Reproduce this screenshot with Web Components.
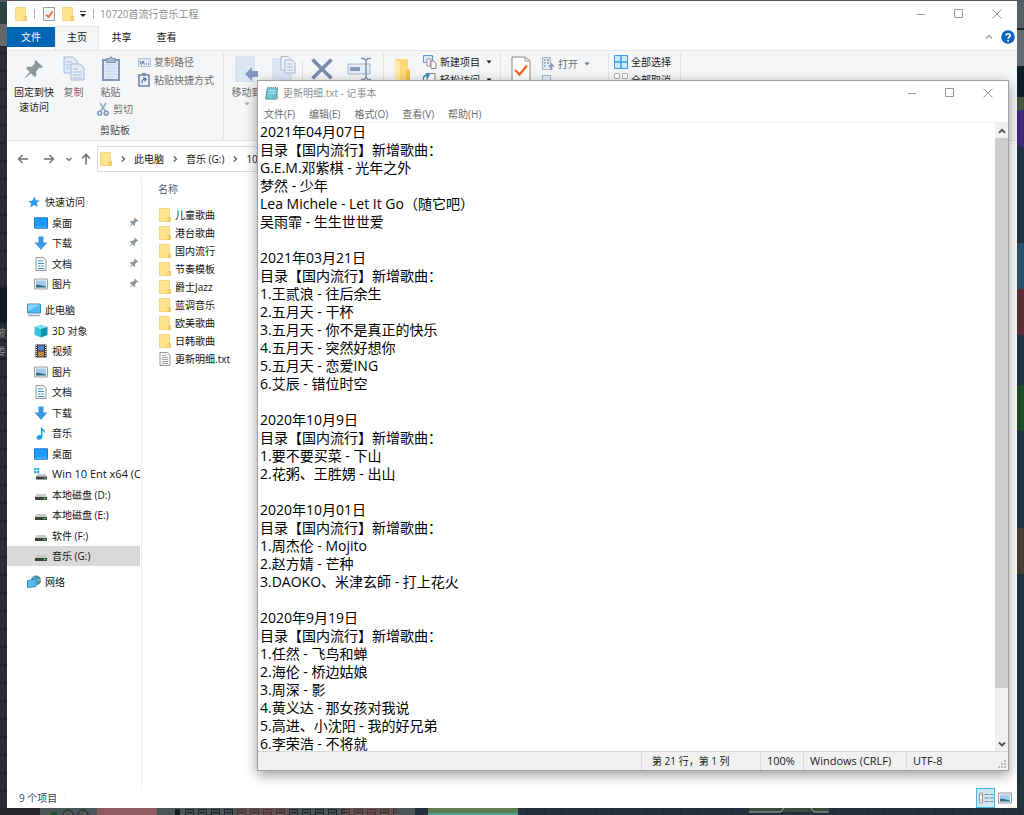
<!DOCTYPE html>
<html lang="zh-CN">
<head>
<meta charset="utf-8">
<title>10720首流行音乐工程</title>
<style>
html,body{margin:0;height:100%}
body{font:10px/16px "Open Sans","Noto Sans CJK SC",sans-serif;color:#111;background:#22323c}
</style>
</head>
<body>
<desk-top>
  <explorer-window></explorer-window>
  <notepad-window></notepad-window>
</desk-top>
<script>
const ICONS = {
  folder: ['0 0 12 14', '<path d="M.5.500h10v13H.5z" fill="#ffe391" stroke="#f5d67f"/><path d="M9 9.500h2.500v4H9z" fill="#f8d774" stroke="#efc75c"/>'],
  bigfolder: ['0 0 18 26', '<path d="M2 3h13v9l2 2v12H2z" fill="#fbd978"/><path d="M2 3l5 3v20H2z" fill="#ffe9a3"/><path d="M15 13l2 2v11h-4V15z" fill="#f0c352"/>'],
  props: ['0 0 12 14', '<path d="M.5.500h11v13H.5z" fill="#f4f4f4" stroke="#9d9d9d"/><path d="M3 7.500l2.500 2.500L9.500 4.500" fill="none" stroke="#e8622c" stroke-width="1.600"/>'],
  bigprops: ['0 0 20 26', '<path d="M1 1h13l5 4v21H1z" fill="#fff" stroke="#888"/><path d="M14 1v4h5" fill="none" stroke="#999"/><path d="M4 14l4.500 4.500L16 9.500" fill="none" stroke="#f26522" stroke-width="2.200"/>'],
  qat: ['0 0 8 8', '<path d="M1 1.500h6" stroke="#333"/><path d="M1 4h6L4 7z" fill="#222"/>'],
  min: ['0 0 10 10', '<path d="M1 5.500h8" stroke="#999"/>'],
  max: ['0 0 10 10', '<path d="M.5.500h8v8h-8z" fill="none" stroke="#999"/>'],
  close: ['0 0 10 10', '<path d="M.5.500l9 9M9.500.500l-9 9" stroke="#999"/>'],
  up: ['0 0 8 8', '<path d="M1 5.500l3-3 3 3" fill="none" stroke="#999" stroke-width="1.200"/>'],
  help: ['0 0 14 14', '<circle cx="7" cy="7" r="6.800" fill="#0a64c0"/><path d="M5 5.500C5 3.200 9.200 3.200 9.200 5.400 9.200 7 7.100 6.900 7.100 8.700" fill="none" stroke="#fff" stroke-width="1.600"/><circle cx="7.100" cy="10.700" r="1" fill="#fff"/>'],
  pin: ['0 0 20 20', '<path d="M11.500 1l7.500 7-2 1-1.500-.3-3.500 3.800.3 4-1.800 1.500L6.800 14.300 1.500 19 1 18.500l4.500-5.500L2 9.300l1.500-1.600 4 .1 3.500-3.500L10.500 3z" fill="#8a97a1"/>'],
  copy: ['0 0 22 26', '<g fill="#e3ebf6" stroke="#a9bad6"><path d="M1 1h9l4 4v12H1z"/><path d="M8 8h9l4 4v12H8z"/></g><path d="M3 6h6M3 9h5M3 12h4M10 13h5M10 16h9M10 19h9M10 22h9" stroke="#adc0dd"/>'],
  paste: ['0 0 20 26', '<path d="M2 4h16v20H2z" fill="#dfe8f5" stroke="#8396b8" stroke-width="2"/><path d="M5.500 2.500h3l1.500-2 1.500 2h3v4h-9z" fill="#a9b6cc" stroke="#8291ab"/><path d="M4 9h12M4 12h12M4 15h12M4 18h12M4 21h12" stroke="#c6d4e9"/>'],
  path: ['0 0 13 9', '<path d="M.5.500h12v8H.5z" fill="#dfe7f2" stroke="#b2c1d8"/><path d="M2 3l1.500 3.500L5 3l1.500 3.500M8 6h1M10 6h1" fill="none" stroke="#5d7396"/>'],
  shortcut: ['0 0 12 14', '<path d="M1 2h10v11H1z" fill="#eaf0f8" stroke="#7187ac" stroke-width="1.600"/><path d="M4 0h4v3H4z" fill="#7d8fae"/><path d="M4 10c0-3 1-4 3-4M5.200 4.500L8 6 6.500 8.500" fill="none" stroke="#48689d" stroke-width="1.200"/>'],
  cut: ['0 0 12 14', '<path d="M3 1l5.500 8.500M9 1L3.500 9.500" stroke="#9aa9c0" stroke-width="1.500"/><g fill="none" stroke="#7d95bd" stroke-width="1.500"><circle cx="2.800" cy="11.200" r="1.900"/><circle cx="9.200" cy="11.200" r="1.900"/></g>'],
  moveto: ['0 0 24 26', '<path d="M1 1h18v25H1z" fill="#dbe5f4" stroke="#cbd8ec"/><path d="M10 18l7-7v4h6v6h-6v4z" fill="#8398bd"/>'],
  copyto: ['0 0 24 26', '<path d="M1 3h18v23H1z" fill="#dbe5f4" stroke="#cbd8ec"/><g fill="#edf2f9" stroke="#a3b5d2"><path d="M9 .5h7l3 3V14H9z"/><path d="M13 4h7l3 3v10H13z"/></g><path d="M15 8h5M15 11h6M15 14h6" stroke="#a3b5d2"/>'],
  del: ['0 0 22 22', '<path d="M1.500 1.500l19 19M20.500 1.500l-19 19" stroke="#7a8db0" stroke-width="3.600"/>'],
  rename: ['0 0 24 24', '<path d="M1 7h22v10H1z" fill="#e7edf6" stroke="#a3b4d0"/><path d="M3 10h10v4H3z" fill="#8699bb"/><path d="M14 1.500h3l2 2 2-2h3M14 22.500h3l2-2 2 2h3M19 3v18" fill="none" stroke="#7f91b3" stroke-width="1.500"/>'],
  newitem: ['0 0 14 14', '<path d="M.5.500h9v7h-9z" fill="#d7eaf5" stroke="#5b9dbb"/><path d="M4 4h4v7H4z" fill="#fff" stroke="#999"/><path d="M8 6h3l2 2v5.500H8z" fill="#fff" stroke="#888"/><path d="M7 5v6" stroke="#d88"/>'],
  easy: ['0 0 14 14', '<path d="M4 .5h8v12H4z" fill="#fff" stroke="#888"/><path d="M0 7c0-3 2-5 5-5M3 0l3 2-2 3" fill="none" stroke="#2f8db5" stroke-width="1.500"/>'],
  open: ['0 0 12 14', '<path d="M.5.500h8v12h-8z" fill="#e4ebf5" stroke="#a5b4cd"/><path d="M2 3h1.500M2 6h1.500M2 9h1.500M5 3h2M5 6h2" stroke="#8294b3" stroke-width="1.400"/><path d="M9.500 13V8M7 10l2.500-3L12 10" fill="none" stroke="#8b9dbd" stroke-width="1.500"/>'],
  edit: ['0 0 12 14', '<path d="M.5.500h8v12h-8z" fill="#e4ebf5" stroke="#a5b4cd"/>'],
  selall: ['0 0 14 14', '<path d="M.5.500h13v13H.5z" fill="#cfe8fb" stroke="#3a9be6"/><path d="M7 0v14M0 7h14" stroke="#3a9be6" stroke-width="1.500"/>'],
  selnone: ['0 0 14 14', '<path d="M.5.500h5v5h-5zM8.500.500h5v5h-5zM.5 8.500h5v5h-5zM8.500 8.500h5v5h-5z" fill="#fff" stroke="#b5b5b5"/>'],
  tri: ['0 0 6 4', '<path d="M.5.500h5L3 3.500z" fill="currentColor"/>'],
  back: ['0 0 12 12', '<path d="M11 6H1.500M5.500 2l-4 4 4 4" fill="none" stroke="#707070" stroke-width="1.400"/>'],
  fwd: ['0 0 12 12', '<path d="M1 6h9.500M6.500 2l4 4-4 4" fill="none" stroke="#707070" stroke-width="1.400"/>'],
  down: ['0 0 8 8', '<path d="M1.500 3L4 5.500 6.500 3" fill="none" stroke="#777" stroke-width="1.300"/>'],
  upward: ['0 0 12 12', '<path d="M6 11.500V1.500M2 5.500l4-4 4 4" fill="none" stroke="#707070" stroke-width="1.600"/>'],
  chev: ['0 0 6 8', '<path d="M2 1.500L4.500 4 2 6.500" fill="none" stroke="#555" stroke-width="1.200"/>'],
  star: ['0 0 12 12', '<path d="M6.500.500l1.400 3.700 3.900.3-3 2.600.9 4L6 8.900l-3.800 2.500 1-3.900L.3 5.200l3.900-.5z" fill="#2a9df0"/>'],
  desktop: ['0 0 14 12', '<path d="M.5.800h13v10.400H.5z" fill="#1a9afc" stroke="#1479cc"/><path d="M1 10h12" stroke="#5db9ff"/>'],
  download: ['0 0 14 14', '<path d="M4.500.500h5v6h4L7 13.800.5 6.500h4z" fill="#3b97e3"/>'],
  doc: ['0 0 12 14', '<path d="M1 .5h7.500L11 3v10.500H1z" fill="#f7fafc" stroke="#8f999f"/><path d="M3 4h3M3 6.500h6M3 9h2.500M6.500 9H9M3 11.500h6M6.500 4H8" stroke="#3b93c8" stroke-width="1.200"/>'],
  pic: ['0 0 14 12', '<path d="M.5 1h13v10H.5z" fill="#f6f6f6" stroke="#999"/><path d="M2 2.500h10v7H2z" fill="#9fd0ee"/><path d="M2 9.500V6.500l4 .5 6 1.500v1z" fill="#2f6f86"/>'],
  pc: ['0 0 14 14', '<path d="M.5 1h13v9H.5z" fill="#4fb9f5" stroke="#3c8fc4"/><path d="M1 1.500h12L1 8z" fill="#8cd4fb"/><path d="M1 12.500h12" stroke="#9ab" stroke-width="1.500"/>'],
  cube: ['0 0 14 14', '<path d="M7 .5l6.500 2.200L7 5 .5 2.700z" fill="#7fe3f0"/><path d="M.5 2.700L7 5v8.500L.5 11z" fill="#39c3d8"/><path d="M13.500 2.700L7 5v8.500l6.500-2.500z" fill="#0f93b3"/>'],
  video: ['0 0 12 14', '<path d="M.5.500h11v13H.5z" fill="#333"/><path d="M3 1.500h6v5H3z" fill="#5a7fd0"/><path d="M3 7.500h6v5H3z" fill="#c08a3c"/><path d="M1.500 1v12M10.500 1v12" stroke="#ddd" stroke-dasharray="1 1"/>'],
  music: ['0 0 12 14', '<path d="M6 0c.3 3 5 3.500 4 8-.5-2-1.500-2.800-2.500-3v5.500c0 3.800-6 4.200-6 1.200 0-2.200 2.200-3.200 4.500-2.500z" fill="#18a0ee"/>'],
  disk: ['0 0 14 12', '<path d="M2.500 5h9L13 8H1z" fill="#c9c9c9"/><path d="M1 8h12v3H1z" fill="#424242"/><path d="M9.500 9.500H12" stroke="#40d060" stroke-width="1.200"/>'],
  osdisk: ['0 0 14 12', '<path d="M4 6h7.500L13 8.500H2z" fill="#c9c9c9"/><path d="M2 8.500h11v3H2z" fill="#424242"/><path d="M10 10h2" stroke="#40d060"/><path d="M0 0h2.300v2.300H0zM3 0h2.300v2.300H3zM0 3h2.300v2.300H0zM3 3h2.300v2.300H3z" fill="#22b4f2"/>'],
  net: ['0 0 14 14', '<circle cx="9" cy="5.500" r="5" fill="#4b8ea8"/><path d="M6 2c3 1 4 4 3 8M5 5h9" stroke="#a8d4e4" fill="none"/><path d="M.5 5.500L9 4v7.500l-8.500 1z" fill="#55bbf7" stroke="#3a8cc0"/>'],
  txt: ['0 0 12 14', '<path d="M1 .5h7.500L11 3v10.500H1z" fill="#f5f5f5" stroke="#999"/><path d="M3 3.500h4M3 5.500h6M3 7.500h6M3 9.500h6M3 11.500h6" stroke="#aaa"/>'],
  notepad: ['0 0 14 14', '<path d="M3 2h9.500l1 11.500H2z" fill="#d9c99a"/><path d="M2.500 1.500h10l-1.500 11.500H.5z" fill="#6fc3d6" stroke="#4e9cb0"/><path d="M3.500 4.500h7M3.200 7h7" stroke="#b5e6ef"/><path d="M3 1h9" stroke="#eee" stroke-dasharray="1 1" stroke-width="1.600"/>'],
  sup: ['0 0 8 8', '<path d="M1 5.800L4 2.800l3 3" fill="none" stroke="#505050" stroke-width="1.800"/>'],
  sdown: ['0 0 8 8', '<path d="M1 2.500l3 3 3-3" fill="none" stroke="#505050" stroke-width="1.800"/>'],
  grip: ['0 0 8 8', '<path d="M6 0h2v2H6zM3 3h2v2H3zM6 3h2v2H6zM0 6h2v2H0zM3 6h2v2H3zM6 6h2v2H6z" fill="#bbb"/>'],
  details: ['0 0 16 12', '<path d="M1.500 1h3v10h-3z" fill="#fff" stroke="#999"/><path d="M2.500 3h1M2.500 8h1" stroke="#d55"/><path d="M6.500 2.500h4M11.500 2.500h4M6.500 6h4M11.500 6h4M6.500 9.500h4M11.500 9.500h4" stroke="#7a8a94"/>'],
};

const define = (name, html, setup) => {
  const tpl = document.createElement('template');
  tpl.innerHTML = html;
  customElements.define(name, class extends HTMLElement {
    connectedCallback() {
      if (this.shadowRoot) return;
      this.attachShadow({mode: 'open'}).append(tpl.content.cloneNode(true));
      if (setup) setup(this, this.shadowRoot);
    }
  });
};

define('win-icon', `<style>:host{display:inline-flex;flex:none}svg{display:block}</style>`, (el, root) => {
  const [box, art] = ICONS[el.getAttribute('name')];
  const [, , w, h] = box.split(' ');
  root.innerHTML += `<svg width="${w}" height="${h}" viewBox="${box}" aria-hidden="true">${art}</svg>`;
});

define('window-controls', `<style>
:host{display:flex;height:24px;margin-right:1px}
button{all:unset;box-sizing:border-box;width:38px;display:grid;place-items:center}
</style>
<button aria-label="最小化"><win-icon name="min"></win-icon></button>
<button aria-label="最大化"><win-icon name="max"></win-icon></button>
<button aria-label="关闭"><win-icon name="close"></win-icon></button>`);

define('big-button', `<style>
:host{display:block}
button{all:unset;display:flex;flex-direction:column;align-items:center;gap:2px;text-align:center;line-height:15px;color:inherit;width:100%;padding-top:2px}
.art{height:28px;display:grid;place-items:center}
</style><button><span class="art"></span><slot></slot></button>`, (el, root) => {
  root.querySelector('.art').innerHTML = `<win-icon name="${el.getAttribute('icon')}"></win-icon>`;
  if (el.hasAttribute('label')) root.querySelector('button').setAttribute('aria-label', el.getAttribute('label'));
});

define('small-button', `<style>
:host{display:block}
button{all:unset;display:flex;align-items:center;gap:3px;height:16px;white-space:nowrap}
.i{width:14px;display:grid;place-items:center}
.t{margin-left:3px;display:flex}
</style><button><span class="i"></span><slot></slot><span class="t"></span></button>`, (el, root) => {
  root.querySelector('.i').innerHTML = `<win-icon name="${el.getAttribute('icon')}"></win-icon>`;
  if (el.hasAttribute('menu')) root.querySelector('.t').innerHTML = '<win-icon name="tri"></win-icon>';
  if (el.hasAttribute('label')) root.querySelector('button').setAttribute('aria-label', el.getAttribute('label'));
});

define('ribbon-group', `<style>
:host{display:flex;box-sizing:border-box;flex:none;border-right:1px solid #e2e3e4;margin:2px 0;height:86px;align-items:flex-start}
</style><slot></slot>`);

define('ribbon-bar', `<style>
:host{display:flex;overflow:hidden;background:#f5f6f7;border-top:1px solid #e4e5e6;border-bottom:1px solid #e4e5e6;height:91px;box-sizing:border-box;color:#6f6f6f}
.clip{width:217px;display:grid;grid-template-columns:42px 37px 37px 1fr;grid-template-rows:48px 16px auto;padding-left:6px}
.pin{grid-row:1/3}
.dark{color:#1a1a1a}
.col{display:grid;gap:2px;padding-top:1px;align-content:start}
.clip .col{padding-left:8px}
.cutrow{grid-column:3/5;margin-left:4px}
.label{grid-column:1/-1;text-align:center;color:#444;margin:5px 6px 0 0}
.org{width:160px;padding-left:4px}
.org big-button{width:37px}
.org i{width:1px;height:50px;margin-top:8px;background:#e2e3e4}
.new{width:117px;padding-left:9px;gap:12px}
.opn{width:108px;padding-left:10px;gap:10px}
.opn .col{padding-top:3px}
.sel{width:72px;padding-left:5px}
.mini{color:#aaa}
</style>
<ribbon-group class="clip">
  <big-button class="dark pin" icon="pin">固定到快<br>速访问</big-button>
  <big-button icon="copy">复制</big-button>
  <big-button icon="paste">粘贴</big-button>
  <div class="col"><small-button icon="path">复制路径</small-button><small-button icon="shortcut">粘贴快捷方式</small-button></div>
  <small-button class="cutrow" icon="cut">剪切</small-button>
  <span class="label">剪贴板</span>
</ribbon-group>
<ribbon-group class="org">
  <big-button icon="moveto"><span>移动到</span><win-icon class="mini" name="tri"></win-icon></big-button>
  <big-button icon="copyto" label="复制到"></big-button><i></i>
  <big-button icon="del" label="删除"></big-button>
  <big-button icon="rename" label="重命名"></big-button>
</ribbon-group>
<ribbon-group class="new dark">
  <big-button icon="bigfolder" label="新建文件夹"></big-button>
  <div class="col"><small-button icon="newitem" menu>新建项目</small-button><small-button icon="easy" menu>轻松访问</small-button></div>
</ribbon-group>
<ribbon-group class="opn">
  <big-button icon="bigprops" label="属性"></big-button>
  <div class="col"><small-button icon="open" menu>打开</small-button><small-button icon="edit" label="编辑"></small-button></div>
</ribbon-group>
<ribbon-group class="sel dark">
  <div class="col"><small-button icon="selall">全部选择</small-button><small-button icon="selnone">全部取消</small-button></div>
</ribbon-group>`);

define('nav-item', `<style>
:host{display:block}
a{display:flex;align-items:center;gap:4px;height:100%;padding-left:27px;color:inherit;text-decoration:none;white-space:nowrap;overflow:hidden;box-sizing:border-box}
:host([root]) a{padding-left:20px}
:host([current]) a{background:#d9d9d9}
.i{width:14px;display:grid;place-items:center;flex:none}
.p{margin:0 3px 0 auto;zoom:.5}
</style><a href="#"><span class="i"></span><slot></slot></a>`, (el, root) => {
  root.querySelector('.i').innerHTML = `<win-icon name="${el.getAttribute('icon')}"></win-icon>`;
  if (el.hasAttribute('pinned')) root.querySelector('a').insertAdjacentHTML('beforeend', '<span class="p"><win-icon name="pin"></win-icon></span>');
});

define('nav-pane', `<style>
:host{display:block;width:133px;box-sizing:border-box;padding-top:15px}
nav{display:grid;grid-template-columns:minmax(0,1fr);grid-auto-rows:20px 21px;margin-bottom:6px}
.latin{font-size:11px}
</style>
<nav><nav-item root icon="star">快速访问</nav-item><nav-item pinned icon="desktop">桌面</nav-item><nav-item pinned icon="download">下载</nav-item><nav-item pinned icon="doc">文档</nav-item><nav-item pinned icon="pic">图片</nav-item></nav>
<nav><nav-item root icon="pc">此电脑</nav-item><nav-item icon="cube">3D 对象</nav-item><nav-item icon="video">视频</nav-item><nav-item icon="pic">图片</nav-item><nav-item icon="doc">文档</nav-item><nav-item icon="download">下载</nav-item><nav-item icon="music">音乐</nav-item><nav-item icon="desktop">桌面</nav-item><nav-item class="latin" icon="osdisk">Win 10 Ent x64 (C:)</nav-item><nav-item icon="disk">本地磁盘 (D:)</nav-item><nav-item icon="disk">本地磁盘 (E:)</nav-item><nav-item icon="disk">软件 (F:)</nav-item><nav-item current icon="disk">音乐 (G:)</nav-item></nav>
<nav><nav-item root icon="net">网络</nav-item></nav>`);

define('file-list', `<style>
:host{display:block;padding:4px 0 0 16px}
table{border-collapse:collapse}
th{font-weight:400;color:#4c607a;text-align:left;padding:0 0 9px}
td{padding:0;height:18px}
span{display:flex;align-items:center;gap:4px;padding-left:1px;height:18px}
</style><table><thead><tr><th scope="col">名称</th></tr></thead><tbody></tbody></table>`, (el, root) => {
  root.querySelector('tbody').innerHTML = ['儿童歌曲','港台歌曲','国内流行','节奏模板','爵士Jazz','蓝调音乐','欧美歌曲','日韩歌曲','更新明细.txt']
    .map(n => `<tr><td><span><win-icon name="${n.endsWith('.txt') ? 'txt' : 'folder'}"></win-icon>${n}</span></td></tr>`).join('');
});

define('address-bar', `<style>
:host{display:flex;align-items:center;height:36px;padding-left:10px;box-sizing:border-box}
button{all:unset;display:grid;place-items:center}
.nav{display:grid;width:80px;justify-items:start;grid-template-columns:26px 22px 15px 17px;align-items:center}
.box{flex:1;margin-right:200px;border:1px solid #dcdcdc;height:24px;display:flex;align-items:center;gap:8px;padding-left:2px;white-space:nowrap}
a{color:inherit;text-decoration:none}
</style>
<div class="nav"><button aria-label="后退"><win-icon name="back"></win-icon></button><button aria-label="前进"><win-icon name="fwd"></win-icon></button><button aria-label="最近"><win-icon name="down"></win-icon></button><button aria-label="向上"><win-icon name="upward"></win-icon></button></div>
<div class="box"><win-icon name="folder"></win-icon><win-icon name="chev"></win-icon><a href="#">此电脑</a><win-icon name="chev"></win-icon><a href="#">音乐 (G:)</a><win-icon name="chev"></win-icon><a href="#">10720首流行音乐工程</a></div>`);

define('explorer-window', `<style>
:host{display:flex;flex-direction:column;background:#fff;flex:1;min-width:0;overflow:hidden;position:relative}
.title{display:flex;align-items:center;height:25px;padding-left:8px;color:#8e8e8e}
.title .qa{display:grid;grid-template-columns:19px 9px 19px 17px 14px 7px;align-items:center}
i{width:1px;height:10px;background:#aaa}
.title span{flex:1}
.tabs{display:flex;align-items:flex-start;height:24px}
.tabs button{all:unset;width:45px;text-align:center;line-height:22px;box-sizing:border-box}
.tabs .file{background:#0065b3;color:#fff;width:48px;height:20px;line-height:20px;margin-top:1px}
.tabs .on{background:#f5f6f7;border:1px solid #e4e5e6;border-bottom:0;width:44px;height:25px;line-height:20px;padding-bottom:4px}
.end{margin-left:auto;display:flex;align-items:center;gap:8px;padding-right:2px;height:22px}
.body{flex:1;display:flex;min-height:0}
nav-pane{flex:none}
.files{flex:1;border-left:1px solid #f0f0f0;margin-left:1px}
.status{height:20px;display:flex;align-items:center;padding:0 5px 0 12px;color:#30445f}
.status i{background:#eee;margin-left:8px}
.views{margin-left:auto;display:flex;align-items:center;gap:3px}
.views button{all:unset;width:17px;height:18px;display:grid;place-items:center}
.views button:last-child{width:14px}
.views .on{background:#cce8f6;border:1px solid #4ab5e3}
.mark{position:absolute;right:23px;bottom:20px;font:700 19px/24px "Open Sans","Noto Sans CJK SC",sans-serif;color:#fff}
</style>
<header class="title"><div class="qa"><win-icon name="folder"></win-icon><i></i><win-icon name="props"></win-icon><win-icon name="folder"></win-icon><win-icon name="qat"></win-icon><i></i></div><span>10720首流行音乐工程</span><window-controls></window-controls></header>
<div class="tabs"><button class="file">文件</button><button class="on">主页</button><button>共享</button><button>查看</button><div class="end"><win-icon name="up"></win-icon><win-icon name="help"></win-icon></div></div>
<ribbon-bar></ribbon-bar>
<address-bar></address-bar>
<div class="body"><nav-pane></nav-pane><div class="files"><file-list></file-list></div></div>
<span class="mark">FL音乐工程网</span>
<footer class="status">9 个项目<i></i><div class="views"><button class="on" aria-label="详细信息"><win-icon name="details"></win-icon></button><button aria-label="大图标"><win-icon name="pic"></win-icon></button></div></footer>`);

const NOTES = `2021年04月07日
目录【国内流行】新增歌曲：
G.E.M.邓紫棋 - 光年之外
梦然 - 少年
Lea Michele - Let It Go（随它吧）
吴雨霏 - 生生世世爱

2021年03月21日
目录【国内流行】新增歌曲：
1.王贰浪 - 往后余生
2.五月天 - 干杯
3.五月天 - 你不是真正的快乐
4.五月天 - 突然好想你
5.五月天 - 恋爱ING
6.艾辰 - 错位时空

2020年10月9日
目录【国内流行】新增歌曲：
1.要不要买菜 - 下山
2.花粥、王胜娚 - 出山

2020年10月01日
目录【国内流行】新增歌曲：
1.周杰伦 - Mojito
2.赵方婧 - 芒种
3.DAOKO、米津玄師 - 打上花火

2020年9月19日
目录【国内流行】新增歌曲：
1.任然 - 飞鸟和蝉
2.海伦 - 桥边姑娘
3.周深 - 影
4.黄义达 - 那女孩对我说
5.高进、小沈阳 - 我的好兄弟
6.李荣浩 - 不将就`;

define('notepad-window', `<style>
:host{display:flex;flex-direction:column;position:absolute;left:257px;right:15px;top:80px;bottom:44px;background:#fff;border:1px solid #a2a2a2;box-shadow:0 4px 12px rgba(0,0,0,.4)}
.title{display:flex;align-items:center;gap:4px;height:24px;padding-left:7px;color:#8e8e8e}
.title span{flex:1}
.menu{display:flex;gap:14px;height:18px;align-items:center;padding-left:6px;border-bottom:1px solid #efefef;box-sizing:border-box;color:#6b6b6b}
.menu button{all:unset}
.edit{flex:1;display:flex;min-height:0}
textarea{flex:1;min-width:0;border:0;outline:0;resize:none;overflow:hidden;padding:0 2px;margin:0;background:#fff;color:#000;font:14px/18px "Open Sans","Noto Sans CJK SC",sans-serif;white-space:pre}
.bar{width:13px;background:#f0f0f0;display:flex;flex-direction:column}
.bar button{all:unset;height:15px;display:grid;place-items:center}
.track{flex:1;display:flex;flex-direction:column}
.thumb{height:92%;background:#cdcdcd}
.status{display:flex;height:19px;box-sizing:border-box;background:#f0f0f0;border-top:1px solid #d9d9d9;color:#1a1a1a;line-height:18px;justify-content:flex-end;position:relative}
.status span{border-left:1px solid #d9d9d9;padding-left:6px;box-sizing:border-box}
.status .latin{font-size:11px}
.status .pos{width:119px;padding-left:10px}
.zoomed{width:43px}
.eol{width:103px}
.enc{width:102px}
win-icon.grip{position:absolute;right:2px;bottom:2px}
</style>
<header class="title"><win-icon name="notepad"></win-icon><span>更新明细.txt - 记事本</span><window-controls></window-controls></header>
<div class="menu"><button>文件(F)</button><button>编辑(E)</button><button>格式(O)</button><button>查看(V)</button><button>帮助(H)</button></div>
<div class="edit"><textarea aria-label="更新明细.txt" spellcheck="false"></textarea>
<div class="bar"><button aria-label="向上滚动"><win-icon name="sup"></win-icon></button><div class="track"><div class="thumb"></div></div><button aria-label="向下滚动"><win-icon name="sdown"></win-icon></button></div></div>
<footer class="status"><span class="pos">第 21 行，第 1 列</span><span class="zoomed latin">100%</span><span class="eol latin">Windows (CRLF)</span><span class="enc latin">UTF-8</span><win-icon class="grip" name="grip"></win-icon></footer>`,
(el, root) => { root.querySelector('textarea').value = NOTES; });

define('desk-top', `<style>
:host{display:flex;box-sizing:border-box;min-height:100vh;padding:1px 7px 7px;position:relative;overflow:hidden;
background:
linear-gradient(#55585c,#55585c) 0 0/100% 2px no-repeat,
linear-gradient(#2a4340 0 24px,#66696c 24px 46px,transparent 46px) 0 0/7px 100% no-repeat,
linear-gradient(transparent 288px,#111c22 288px 322px,transparent 322px) 0 0/7px 100% no-repeat,
repeating-linear-gradient(#2c2d33 0 16px,#212227 16px 18px) 0 0/7px 100% no-repeat,
linear-gradient(#5a5f64 0 28px,#20262b 28px 30px,#646a6e 30px 66px,#0f1f29 66px 97px,#4a5240 97px 110px,#3d2c78 110px 147px,transparent 147px 243px,#2b506c 243px 289px,#5b2c33 289px 335px,transparent 335px 385px,#1f4a2c 385px 431px,transparent 431px 528px,#4a3d33 528px 574px,transparent 574px) 100% 0/7px 100% no-repeat,
#22323c}
.ghost{position:absolute;left:-4px;top:324px;width:10px;line-height:18px;color:#84868a}
.strip{position:absolute;left:0;bottom:0}
</style>
<span class="ghost">玻<br>娄</span>
<svg class="strip" width="1024" height="7" aria-hidden="true">
<defs><pattern id="g" width="17" height="7" patternUnits="userSpaceOnUse"><path d="M0 0v7" stroke="#16232b"/></pattern><pattern id="b" width="13" height="7" x="183" patternUnits="userSpaceOnUse"><path d="M2.500 1.500h8V8h-8zM4 4.500h5" fill="#454b4c" stroke="#1e2425"/></pattern></defs>
<path d="M0 0h40v7H0z" fill="#26272b"/><path d="M40 0h375v7H40z" fill="#4b5658"/><path d="M520 0h504v7H520z" fill="url(#g)"/>
<circle cx="54" cy="7" r="3" fill="#0b5a1b"/><g fill="#555" stroke="#222"><circle cx="68" cy="7" r="5"/><circle cx="83" cy="7" r="5"/></g>
<path d="M97 0h60v7H97z" fill="#8e5c60"/><path d="M175 1h5v6h-5z" fill="#15191b"/><path d="M185 0h212v7H185z" fill="url(#b)"/><path d="M237 0h52v7h-52zM345 0h52v7h-52z" fill="#8e4c50" opacity=".35"/>
<path d="M428 0h90v5h-90z" fill="#5e7e50"/><path d="M428 5h90v2h-90z" fill="#4aa09b"/><path d="M749 0h80v4h-80z" fill="#3b4a3c"/><path d="M749 4h32l3-4M811 0l3 4h15" fill="none" stroke="#9aa6b4"/></svg>
<slot></slot>`);
</script>
</body>
</html>
